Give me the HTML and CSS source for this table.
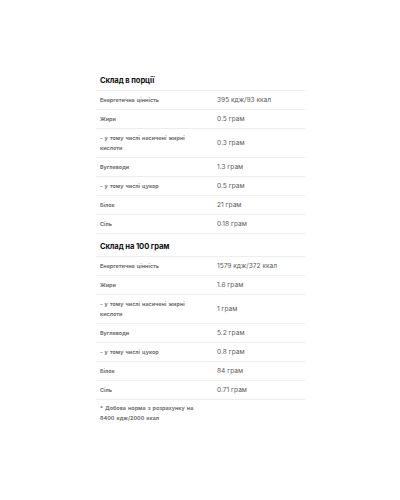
FILE: index.html
```html
<!DOCTYPE html>
<html lang="uk">
<head>
<meta charset="utf-8">
<link rel="stylesheet" href="styles.css">
</head>
<body>
<div class="panel">
  <section class="block">
    <h3 class="title">Склад в порції</h3>
    <div class="row"><div class="lbl">Енергетична цінність</div><div class="val">395 кдж/93 ккал</div></div>
    <div class="row"><div class="lbl">Жири</div><div class="val">0.5 грам</div></div>
    <div class="row"><div class="lbl">- у тому числі насичені жирні кислоти</div><div class="val">0.3 грам</div></div>
    <div class="row"><div class="lbl">Вуглеводи</div><div class="val">1.3 грам</div></div>
    <div class="row"><div class="lbl">- у тому числі цукор</div><div class="val">0.5 грам</div></div>
    <div class="row"><div class="lbl">Білок</div><div class="val">21 грам</div></div>
    <div class="row"><div class="lbl">Сіль</div><div class="val">0.18 грам</div></div>
  </section>
  <section class="block">
    <h3 class="title">Склад на 100 грам</h3>
    <div class="row"><div class="lbl">Енергетична цінність</div><div class="val">1579 кдж/372 ккал</div></div>
    <div class="row"><div class="lbl">Жири</div><div class="val">1.6 грам</div></div>
    <div class="row"><div class="lbl">- у тому числі насичені жирні кислоти</div><div class="val">1 грам</div></div>
    <div class="row"><div class="lbl">Вуглеводи</div><div class="val">5.2 грам</div></div>
    <div class="row"><div class="lbl">- у тому числі цукор</div><div class="val">0.8 грам</div></div>
    <div class="row"><div class="lbl">Білок</div><div class="val">84 грам</div></div>
    <div class="row"><div class="lbl">Сіль</div><div class="val">0.71 грам</div></div>
  </section>
  <p class="note">* Добова норма з розрахунку на 8400 кдж/2000 ккал</p>
</div>
</body>
</html>
```

FILE: styles.css
```css
html, body {
  margin: 0;
  padding: 0;
  background: #ffffff;
}
body {
  font-family: Inter, "Noto Sans", "DejaVu Sans", sans-serif;
  color: #333;
}
.panel {
  margin: 68px 0 0 96px;
  width: 209px;
}
.title {
  margin: 0;
  height: 22px;
  line-height: 26px;
  padding: 0 4px;
  font-size: 7.6px;
  font-weight: 700;
  color: #111;
  border-bottom: 1px solid #eeeeee;
  letter-spacing: -0.1px;
}
.row {
  display: flex;
  align-items: center;
  border-bottom: 1px solid #eeeeee;
}
.lbl {
  width: 117px;
  box-sizing: border-box;
  padding: 4px 13px 4px 4px;
  font-size: 5.4px;
  line-height: 10px;
  font-weight: 700;
  word-spacing: 0.8px;
  color: #727272;
  flex: none;
}
.val {
  padding: 4px;
  font-size: 6.6px;
  line-height: 10px;
  color: #5a5a5a;
}
.note {
  margin: 0;
  width: 95px;
  padding: 3px 0 0 4px;
  font-size: 5.4px;
  line-height: 10px;
  font-weight: 700;
  word-spacing: 0.8px;
  color: #727272;
}
```
